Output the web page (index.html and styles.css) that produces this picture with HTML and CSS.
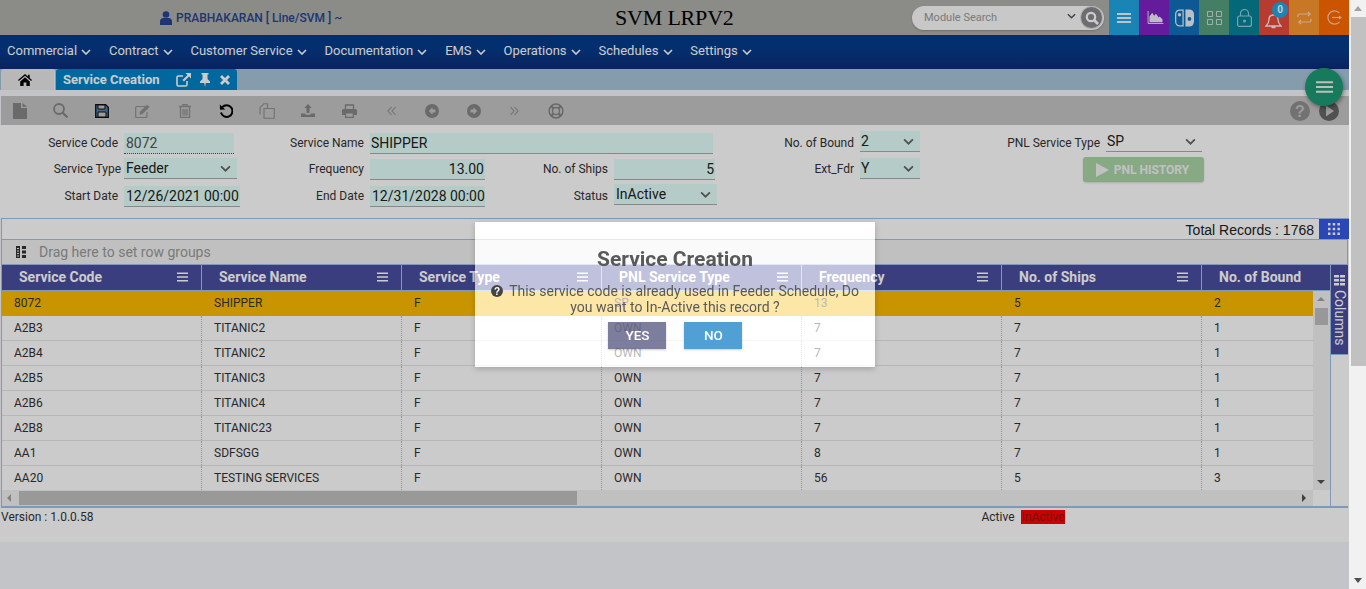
FILE: index.html
```html
<!DOCTYPE html>
<html>
<head>
  <meta charset="utf-8">
  <title>SVM LRPV2</title>
  <link rel="stylesheet" href="styles.css">
</head>
<body>
  <svg class="sprite" xmlns="http://www.w3.org/2000/svg">
    <symbol id="chev" viewBox="0 0 10 6"><path d="M1 1l4 4 4-4" fill="none" stroke="currentColor" stroke-width="1.600"/></symbol>
    <symbol id="bars" viewBox="0 0 12 10"><path d="M0 1h12M0 5h12M0 9h12" fill="none" stroke="currentColor" stroke-width="1.700"/></symbol>
    <symbol id="dots" viewBox="0 0 12 12"><path d="M0 0h2.500v2.500H0zM4.700 0h2.500v2.500H4.700zM9.400 0h2.500v2.500H9.400zM0 4.700h2.500v2.500H0zM4.700 4.700h2.500v2.500H4.700zM9.400 4.700h2.500v2.500H9.400zM0 9.400h2.500v2.500H0zM4.700 9.400h2.500v2.500H4.700zM9.400 9.400h2.500v2.500H9.400z" fill="currentColor"/></symbol>
    <symbol id="list" viewBox="0 0 11 11"><path d="M0 0h5v2.600H0zM6 0h5v2.600H6zM0 4h5v2.600H0zM6 4h5v2.600H6zM0 8h5v2.600H0zM6 8h5v2.600H6z" fill="currentColor"/></symbol>
  </svg>

  <div class="page">
    <header class="topbar">
      <div class="user">
        <svg width="12" height="14" viewBox="0 0 12 14"><circle cx="6" cy="3.500" r="3.300" fill="currentColor"/><path d="M0 14v-3.500C0 8.300 1.500 7 3.200 7h5.600C10.500 7 12 8.300 12 10.500V14z" fill="currentColor"/></svg>
        <span>PRABHAKARAN [ Line/SVM ] ~</span>
      </div>
      <div class="app-title">SVM LRPV2</div>
      <div class="search">
        <span class="search-text">Module Search</span>
        <svg class="search-chev" width="9" height="6"><use href="#chev"/></svg>
        <span class="search-btn">
          <svg width="14" height="14" viewBox="0 0 14 14"><circle cx="6" cy="6" r="4.200" fill="none" stroke="currentColor" stroke-width="2.200"/><path d="M9 9l4 4" stroke="currentColor" stroke-width="2.600"/></svg>
        </span>
      </div>
      <div class="tiles">
        <a class="tile t-menu"><svg width="14" height="10" viewBox="0 0 14 10"><path d="M0 1h14M0 5h14M0 9h14" stroke="currentColor" stroke-width="2"/></svg></a>
        <a class="tile t-chart"><svg width="17" height="13" viewBox="0 0 17 14"><path d="M.5 0v13.500H17" fill="none" stroke="currentColor"/><path d="M2 12V6l3-4 2 3 2-2 3 4 1-1 3 3v3z" fill="currentColor"/></svg></a>
        <a class="tile t-switch"><svg width="19" height="18" viewBox="0 0 20 18"><path d="M8.500.7H5A4.300 4.300 0 0 0 .7 5v8A4.300 4.300 0 0 0 5 17.300h3.500z" fill="none" stroke="currentColor" stroke-width="1.300"/><circle cx="4.700" cy="5.500" r="1.800" fill="currentColor"/><path d="M11 0h4a5 5 0 0 1 5 5v8a5 5 0 0 1-5 5h-4z" fill="currentColor"/><circle cx="15.200" cy="10" r="2" fill="#0f70bb"/></svg></a>
        <a class="tile t-apps"><svg width="15" height="14" viewBox="0 0 15 14"><path d="M.5.500h5v5h-5zM9.500.500h5v5h-5zM.5 8.500h5v5h-5zM9.500 8.500h5v5h-5z" fill="none" stroke="currentColor"/></svg></a>
        <a class="tile t-lock"><svg width="15" height="18" viewBox="0 0 15 18"><path d="M3.500 7V4.500a4 4 0 0 1 8 0V7" fill="none" stroke="currentColor" stroke-width="1.200"/><rect x=".6" y="7" width="13.800" height="10.400" rx="2" fill="none" stroke="currentColor" stroke-width="1.200"/><circle cx="7.500" cy="12" r="1.500" fill="currentColor"/></svg></a>
        <a class="tile t-bell">
          <svg class="bell" width="17" height="15" viewBox="0 0 17 15"><path d="M8.500 1C5.500 1 4 3 4 5.500c0 3-1 4.500-3 6.500h15c-2-2-3-3.500-3-6.500C13 3 11.500 1 8.500 1zM6.500 13.500h4" fill="none" stroke="currentColor" stroke-width="1.300"/></svg>
          <span class="badge">0</span>
        </a>
        <a class="tile t-swap"><svg width="15" height="14" viewBox="0 0 15 14"><path d="M1 6V4.500A1.500 1.500 0 0 1 2.500 3H13M11 .8L13.200 3 11 5.200M14 8v1.500a1.500 1.500 0 0 1-1.500 1.500H2M4 8.800L1.800 11 4 13.200" fill="none" stroke="currentColor" stroke-width="1.200"/></svg></a>
        <a class="tile t-out"><svg width="15" height="15" viewBox="0 0 15 15"><path d="M12.500 3.200a6.600 6.600 0 1 0 0 8.600" fill="none" stroke="currentColor" stroke-width="1.200"/><path d="M5 7.500h9" stroke="currentColor" stroke-width="1.200"/><path d="M12 5.500l3 2-3 2z" fill="currentColor"/></svg></a>
      </div>
    </header>

    <nav class="mainnav">
      <a>Commercial <svg width="10" height="6"><use href="#chev"/></svg></a>
      <a>Contract <svg width="10" height="6"><use href="#chev"/></svg></a>
      <a>Customer Service <svg width="10" height="6"><use href="#chev"/></svg></a>
      <a>Documentation <svg width="10" height="6"><use href="#chev"/></svg></a>
      <a>EMS <svg width="10" height="6"><use href="#chev"/></svg></a>
      <a>Operations <svg width="10" height="6"><use href="#chev"/></svg></a>
      <a>Schedules <svg width="10" height="6"><use href="#chev"/></svg></a>
      <a>Settings <svg width="10" height="6"><use href="#chev"/></svg></a>
    </nav>

    <div class="tabstrip">
      <div class="tab-home">
        <svg width="14" height="12" viewBox="0 0 14 12"><path d="M7 0L0 6l.8 1L7 1.700 13.200 7l.8-1-2.300-2V.8H10v1.800zM2.200 7.500V12h3.400V8.500h2.800V12h3.400V7.500L7 3.200z" fill="currentColor"/></svg>
      </div>
      <div class="tab-active">
        <span class="tab-name">Service Creation</span>
        <svg width="15" height="14" viewBox="0 0 15 14"><path d="M11 8v3.500a1.500 1.500 0 0 1-1.500 1.500h-7A1.500 1.500 0 0 1 1 11.500v-7A1.500 1.500 0 0 1 2.500 3H7" fill="none" stroke="currentColor" stroke-width="1.600"/><path d="M9.500 0H15v5.500l-2-2L8 8.500 6.500 7l5-5z" fill="currentColor"/></svg>
        <svg width="10" height="14" viewBox="0 0 10 14"><path d="M1.500 0h7v1.500H7.500V6l2.500 2.500V10H5.800L5 14l-.8-4H0V8.500L2.500 6V1.500h-1z" fill="currentColor"/></svg>
        <svg class="tab-close" width="10" height="10" viewBox="0 0 10 10"><path d="M1 1l8 8M9 1L1 9" stroke="currentColor" stroke-width="2.800"/></svg>
      </div>
    </div>

    <div class="toolbar">
      <span class="tool"><svg width="14" height="16" viewBox="0 0 14 16"><path d="M0 0h8v5h6v11H0zM9.500 0L14 3.800H9.500z" fill="currentColor"/></svg></span>
      <span class="tool"><svg width="15" height="15" viewBox="0 0 15 15"><circle cx="6" cy="6" r="5" fill="none" stroke="currentColor" stroke-width="1.800"/><path d="M9.500 9.500l5 5" stroke="currentColor" stroke-width="2.200"/></svg></span>
      <span class="tool tool-dark"><svg width="14" height="14" viewBox="0 0 14 14"><path d="M.7.700h10l2.600 2.600v10H.7z" fill="#4f7fae" stroke="currentColor" stroke-width="1.300"/><path d="M3 1h7v4H3z" fill="#c3c3c3" stroke="currentColor"/><path d="M3 8h8v5H3z" fill="#c3c3c3" stroke="currentColor"/></svg></span>
      <span class="tool tool-faint"><svg width="16" height="14" viewBox="0 0 16 14"><path d="M10 2.500H2A1.300 1.300 0 0 0 .7 3.800v8.700a1 1 0 0 0 1 1h9a1.300 1.300 0 0 0 1.300-1.300V8" fill="none" stroke="currentColor" stroke-width="1.200"/><path d="M5 7.500L12 .7l2.500 2.300-7 7-3 .8z" fill="currentColor"/></svg></span>
      <span class="tool tool-faint"><svg width="12" height="14" viewBox="0 0 12 14"><path d="M0 2.500h12M4 2.500V.7h4v1.800M1.500 3v10.300h9V3M4 5v6.500M6 5v6.500M8 5v6.500" fill="none" stroke="currentColor" stroke-width="1.300"/></svg></span>
      <span class="tool tool-black"><svg width="14" height="14" viewBox="0 0 14 14"><path d="M3.300 3.200A5.800 5.800 0 1 1 2 8.500" fill="none" stroke="currentColor" stroke-width="2"/><path d="M.8 .6l.2 5.200 5.200-.3z" fill="currentColor"/></svg></span>
      <span class="tool tool-faint"><svg width="16" height="16" viewBox="0 0 16 16"><path d="M5 5.500V15.300h10.300V5.500H5zM1 11.500V4.500L5 .7h3.500v4.800" fill="none" stroke="currentColor" stroke-width="1.100"/></svg></span>
      <span class="tool"><svg width="14" height="13" viewBox="0 0 14 13"><path d="M7 0l3.700 4H8.500v5h-3V4H3.300zM0 9.500h4.500V10.800h5V9.500H14V13H0z" fill="currentColor"/></svg></span>
      <span class="tool"><svg width="15" height="14" viewBox="0 0 15 14"><path d="M3.500 5V1h8v4" fill="none" stroke="currentColor" stroke-width="1.300"/><path d="M1.500 5h12A1.500 1.500 0 0 1 15 6.500V11h-3v3H3v-3H0V6.500A1.500 1.500 0 0 1 1.500 5zM4.200 9.500v3.200h6.600V9.500z" fill="currentColor"/></svg></span>
      <span class="tool tool-faint"><svg width="9" height="10" viewBox="0 0 9 10"><path d="M4.500 1L1 5l3.500 4M8.500 1L5 5l3.500 4" fill="none" stroke="currentColor" stroke-width="1.100"/></svg></span>
      <span class="tool"><svg width="14" height="14" viewBox="0 0 14 14"><circle cx="7" cy="7" r="7" fill="currentColor"/><path d="M7.500 3.200L3.800 7l3.700 3.800V8.500h3v-3h-3z" fill="#c3c3c3"/></svg></span>
      <span class="tool"><svg width="14" height="14" viewBox="0 0 14 14"><circle cx="7" cy="7" r="7" fill="currentColor"/><path d="M6.500 3.200L10.200 7l-3.700 3.800V8.500h-3v-3h3z" fill="#c3c3c3"/></svg></span>
      <span class="tool tool-faint"><svg width="9" height="10" viewBox="0 0 9 10"><path d="M.5 1L4 5 .5 9M4.500 1L8 5 4.500 9" fill="none" stroke="currentColor" stroke-width="1.100"/></svg></span>
      <span class="tool"><svg width="16" height="16" viewBox="0 0 16 16"><circle cx="8" cy="8" r="6.900" fill="none" stroke="currentColor" stroke-width="1.500"/><circle cx="8" cy="8" r="3.500" fill="none" stroke="currentColor" stroke-width="1.300"/><path d="M3 3l2.500 2.500M13 3l-2.500 2.500M3 13l2.500-2.500M13 13l-2.500-2.500" stroke="currentColor" stroke-width="2.400"/></svg></span>
      <span class="tool-right">
        <svg width="20" height="20" viewBox="0 0 20 20"><circle cx="10" cy="10" r="10" fill="#8f8f8f"/><text x="10" y="15.500" class="help-mark">?</text></svg>
        <svg width="20" height="20" viewBox="0 0 20 20"><circle cx="10" cy="10" r="10" fill="#666"/><path d="M7 4.500l8 5.500-8 5.500z" fill="#c3c3c3"/></svg>
      </span>
    </div>

    <form class="form">
      <label>Service Code</label>
      <div class="field code w-110">8072</div>
      <label>Service Name</label>
      <div class="field name-field">SHIPPER</div>
      <label>No. of Bound</label>
      <div class="field sel up-2 w-60">2 <svg width="11" height="7"><use href="#chev"/></svg></div>
      <label>PNL Service Type</label>
      <div class="field sel up-2 plain w-96">SP <svg width="11" height="7"><use href="#chev"/></svg></div>

      <label class="label-wide">Service Type</label>
      <div class="field sel up-1 w-113">Feeder <svg width="11" height="7"><use href="#chev"/></svg></div>
      <label>Frequency</label>
      <div class="field num w-115">13.00</div>
      <label>No. of Ships</label>
      <div class="field num w-101">5</div>
      <label>Ext_Fdr</label>
      <div class="field sel up-1 w-60">Y <svg width="11" height="7"><use href="#chev"/></svg></div>
      <button class="pnl-btn" type="button">
        <svg width="13" height="14" viewBox="0 0 13 14"><path d="M0 0l13 7-13 7z" fill="currentColor"/></svg>
        PNL HISTORY
      </button>

      <label>Start Date</label>
      <div class="field w-116">12/26/2021 00:00</div>
      <label>End Date</label>
      <div class="field w-115">12/31/2028 00:00</div>
      <label>Status</label>
      <div class="field sel up-2 w-103">InActive <svg width="11" height="7"><use href="#chev"/></svg></div>
    </form>

    <section class="gridbox">
      <div class="records">
        <span class="records-text">Total Records :&nbsp;1768</span>
        <span class="records-btn"><svg width="12" height="12"><use href="#dots"/></svg></span>
      </div>
      <div class="aggrid">
        <div class="groupbar">
          <svg width="10" height="12" viewBox="0 0 10 12"><path d="M0 0h4v12H0zM6 0h4v3H6zM6 4.500h4v3H6zM6 9h4v3H6z" fill="currentColor"/><path d="M1 2.500h2M1 5h2M1 7.500h2M1 10h2" stroke="#f0f0f0"/></svg>
          <span>Drag here to set row groups</span>
        </div>
        <div class="grid-main">
          <div class="grid-table">
            <div class="grid-head">
              <div class="hcell"><span>Service Code</span><svg width="11" height="10"><use href="#bars"/></svg></div>
              <div class="hcell"><span>Service Name</span><svg width="11" height="10"><use href="#bars"/></svg></div>
              <div class="hcell"><span>Service Type</span><svg width="11" height="10"><use href="#bars"/></svg></div>
              <div class="hcell"><span>PNL Service Type</span><svg width="11" height="10"><use href="#bars"/></svg></div>
              <div class="hcell"><span>Frequency</span><svg width="11" height="10"><use href="#bars"/></svg></div>
              <div class="hcell"><span>No. of Ships</span><svg width="11" height="10"><use href="#bars"/></svg></div>
              <div class="hcell"><span>No. of Bound</span></div>
            </div>
            <div class="grid-body">
              <div class="rows">
                <div class="row selected"><div>8072</div><div>SHIPPER</div><div>F</div><div>SP</div><div>13</div><div>5</div><div>2</div></div>
                <div class="row"><div>A2B3</div><div>TITANIC2</div><div>F</div><div>OWN</div><div>7</div><div>7</div><div>1</div></div>
                <div class="row"><div>A2B4</div><div>TITANIC2</div><div>F</div><div>OWN</div><div>7</div><div>7</div><div>1</div></div>
                <div class="row"><div>A2B5</div><div>TITANIC3</div><div>F</div><div>OWN</div><div>7</div><div>7</div><div>1</div></div>
                <div class="row"><div>A2B6</div><div>TITANIC4</div><div>F</div><div>OWN</div><div>7</div><div>7</div><div>1</div></div>
                <div class="row"><div>A2B8</div><div>TITANIC23</div><div>F</div><div>OWN</div><div>7</div><div>7</div><div>1</div></div>
                <div class="row"><div>AA1</div><div>SDFSGG</div><div>F</div><div>OWN</div><div>8</div><div>7</div><div>1</div></div>
                <div class="row"><div>AA20</div><div>TESTING SERVICES</div><div>F</div><div>OWN</div><div>56</div><div>5</div><div>3</div></div>
              </div>
              <div class="vscroll">
                <span class="arrow-up"></span>
                <span class="vthumb"></span>
                <span class="arrow-down"></span>
              </div>
            </div>
            <div class="hscroll">
              <span class="arrow-left"></span>
              <span class="hthumb"></span>
              <span class="arrow-right"></span>
              <span class="corner"></span>
            </div>
          </div>
          <div class="sidebar">
            <div class="columns-btn">
              <svg width="11" height="11"><use href="#list"/></svg>
              <span>Columns</span>
            </div>
          </div>
        </div>
      </div>
    </section>

    <footer class="footer">
      <span>Version : 1.0.0.58</span>
      <span class="legend">Active <b class="inactive">InActive</b></span>
    </footer>

    <button class="fab" type="button"><svg width="17" height="12" viewBox="0 0 17 12"><path d="M0 1.200h17M0 6h17M0 10.800h17" stroke="currentColor" stroke-width="2"/></svg></button>

    <div class="scrim"></div>

    <div class="modal">
      <h2>Service Creation</h2>
      <p>
        <svg width="12" height="12" viewBox="0 0 12 12"><circle cx="6" cy="6" r="6" fill="#444"/><text x="6" y="9.800" class="modal-mark">?</text></svg>
        This service code is already used in Feeder Schedule, Do you want to In-Active this record ?
      </p>
      <div class="modal-actions">
        <button class="btn-yes" type="button">YES</button>
        <button class="btn-no" type="button">NO</button>
      </div>
    </div>
  </div>

  <div class="pagescroll">
    <span class="ps-up"></span>
    <span class="ps-thumb"></span>
    <span class="ps-down"></span>
  </div>
</body>
</html>
```

FILE: styles.css
```css
/* Base */
* {
  box-sizing: border-box;
}

html, body {
  margin: 0;
  height: 100%;
  overflow: hidden;
}

body {
  display: flex;
  font-family: Roboto, "Liberation Sans", sans-serif;
  font-size: 12px;
  color: #333;
  background: #f1f1f1;
}

.sprite {
  display: none;
}

.page {
  position: relative;
  flex: 1;
  height: 589px;
  display: flex;
  flex-direction: column;
  background: #f4f5fa;
  overflow: hidden;
}

/* Top bar */
.topbar {
  height: 35px;
  flex: none;
  display: flex;
  align-items: center;
  background: #aeaeab;
}

.user {
  width: 460px;
  padding-left: 160px;
  display: flex;
  align-items: center;
  gap: 4px;
  color: #254392;
  font-weight: 500;
  font-size: 12px;
}

.app-title {
  width: 452px;
  padding-left: 155px;
  font-family: "Liberation Serif", serif;
  font-size: 22px;
  letter-spacing: -0.2px;
  color: #000;
}

.search {
  width: 192px;
  height: 24px;
  display: flex;
  align-items: center;
  background: #fafafa;
  border-radius: 12px;
  padding: 0 2px 0 12px;
  box-shadow: 0 1px 2px rgba(0, 0, 0, 0.2);
}

.search-text {
  flex: 1;
  font-size: 11px;
  color: #999;
}

.search-chev {
  color: #555;
  margin-right: 5px;
  margin-top: -4px;
}

.search-btn {
  width: 21px;
  height: 21px;
  border-radius: 50%;
  background: #87898c;
  color: #fff;
  display: flex;
  align-items: center;
  justify-content: center;
  box-shadow: 0 0 0 1px #ddd;
}

.tiles {
  display: flex;
  margin-left: 5px;
}

.tile {
  position: relative;
  width: 30px;
  height: 35px;
  display: flex;
  align-items: center;
  justify-content: center;
  color: #fff;
}

.tile svg {
  opacity: 0.9;
}

.t-menu { background: #21a6e2; }
.t-chart { background: #7e23c3; padding-left: 3px; }
.t-switch { background: #0f70bb; }
.t-apps { background: #569f7f; color: #cfe6db; }
.t-lock { background: #068398; color: #a8d5dd; }
.t-bell { background: #e64a3c; }
.t-swap { background: #fb952f; color: #fddcb8; }
.t-out { background: #fe6a00; color: #ffd9bd; }

.bell {
  margin-top: 8px;
  margin-right: 2px;
}

.badge {
  position: absolute;
  top: 2px;
  left: 13px;
  width: 16px;
  height: 16px;
  border-radius: 50%;
  background: #21a6e2;
  font-size: 10px;
  font-weight: 700;
  line-height: 16px;
  text-align: center;
}

/* Main menu */
.mainnav {
  height: 34px;
  flex: none;
  display: flex;
  align-items: center;
  padding: 0 0 3px 7px;
  background: linear-gradient(#063b8b 0%, #063b8b 40%, #0d2c78 100%);
}

.mainnav a {
  color: #fff;
  font-size: 13px;
  margin-right: 17.700px;
  white-space: nowrap;
}

.mainnav svg {
  margin-left: 1px;
  vertical-align: 0;
}

/* Tabs */
.tabstrip {
  height: 21px;
  flex: none;
  display: flex;
  background: #a6c3d7;
  padding-left: 1px;
}

.tab-home {
  width: 54px;
  padding-right: 6px;
  background: #e6e6e6;
  border-radius: 3px 3px 0 0;
  border-right: 1px solid #f4f4f4;
  display: flex;
  align-items: center;
  justify-content: center;
  color: #000;
}

.tab-active {
  width: 181px;
  margin-left: 1px;
  padding: 0 7px;
  display: flex;
  align-items: center;
  gap: 9px;
  background: #0083c7;
  border-radius: 3px 3px 0 0;
  color: #fff;
}

.tab-name {
  width: 104px;
  font-size: 13px;
  font-weight: 700;
  white-space: nowrap;
}

.tab-close {
  margin-left: 1px;
}

/* Toolbar */
.toolbar {
  height: 29px;
  flex: none;
  margin-top: 6px;
  margin-left: 1px;
  display: flex;
  align-items: center;
  background: #c3c3c3;
  color: #808080;
}

.tool {
  width: 41.270px;
  display: flex;
  justify-content: center;
  color: #858585;
}

.tool:first-child {
  margin-left: -2px;
}

.tool-dark { color: #111; }
.tool-black { color: #000; }
.tool-faint { color: #8f8f8f; }

.tool-right {
  margin-left: auto;
  display: flex;
  gap: 9px;
  padding-right: 10px;
}

.help-mark {
  font-family: "Liberation Sans", sans-serif;
  font-weight: 700;
  font-size: 16px;
  fill: #c3c3c3;
  text-anchor: middle;
}

/* Form */
.form {
  height: 93px;
  flex: none;
  padding-top: 8px;
  background: #fefefe;
  display: grid;
  grid-template-columns: 118px 116px 118px 115px 117px 103px 131px 60px 174px 98px;
  grid-template-rows: 26px 27px 27px;
  column-gap: 6px;
  align-items: start;
}

.form label {
  height: 21px;
  line-height: 21px;
  text-align: right;
  white-space: nowrap;
  color: #333;
}

.form .label-wide {
  margin-right: -3px;
}

.field {
  height: 21px;
  justify-self: start;
  padding: 0 1px 0 2px;
  background: #e2fef9;
  border-bottom: 1px solid #aaa;
  font-size: 14px;
  line-height: 20px;
  color: #222;
  white-space: nowrap;
}

.code {
  color: #555;
  border-bottom: 1px dotted #555;
}

.num {
  text-align: right;
}

.sel {
  display: flex;
  align-items: center;
  justify-content: space-between;
  padding-left: 2px;
  padding-right: 6px;
  color: #222;
}

.sel svg {
  color: #666;
  flex: none;
}

.plain {
  background: transparent;
  padding-left: 1px;
}

.up-1 { margin-top: -1px; }
.up-2 { margin-top: -2px; }

.name-field {
  width: 343px;
  grid-column: span 3;
  padding-left: 1px;
}

.w-60 { width: 60px; padding-left: 1px; }
.w-96 { width: 96px; }
.w-101 { width: 101px; }
.w-103 { width: 103px; }
.w-110 { width: 110px; }
.w-113 { width: 113px; }
.w-115 { width: 115px; }
.w-116 { width: 116px; }

.pnl-btn {
  grid-column: span 2;
  justify-self: end;
  width: 121px;
  height: 25px;
  margin-top: -2px;
  padding: 0 2px 0 0;
  border: 0;
  border-radius: 3px;
  display: flex;
  align-items: center;
  justify-content: center;
  gap: 5px;
  background: #a9d4a6;
  color: #f2f2f2;
  font-family: Roboto, sans-serif;
  font-size: 12px;
  font-weight: 700;
  box-shadow: 0 1px 2px rgba(0, 0, 0, 0.15);
}

/* Grid */
.gridbox {
  height: 290px;
  flex: none;
  margin-left: 1px;
  background: #fefefe;
  border-top: 1px solid #9fc0e6;
  display: flex;
  flex-direction: column;
}

.records {
  height: 20px;
  flex: none;
  display: flex;
  align-items: center;
  justify-content: flex-end;
  border-left: 1px solid #9fc0e6;
}

.records-text {
  padding-top: 2px;
  font-family: "Liberation Sans", sans-serif;
  font-size: 14px;
  margin-right: 5px;
  color: #222;
}

.records-btn {
  width: 30px;
  height: 20px;
  display: flex;
  align-items: center;
  justify-content: center;
  background: #3559e6;
  color: #fff;
}

.aggrid {
  flex: 1;
  width: 1347px;
  min-height: 0;
  border: 1px solid #9fc0e6;
  border-bottom-width: 2px;
  display: flex;
  flex-direction: column;
}

.groupbar {
  height: 25px;
  flex: none;
  padding-left: 14px;
  display: flex;
  align-items: center;
  gap: 13px;
  background: #f0f0f0;
  border-bottom: 1px solid #9fc0e6;
  color: #333;
}

.groupbar span {
  font-size: 14px;
  color: #999;
}

.grid-main {
  flex: 1;
  min-height: 0;
  display: flex;
}

.grid-table {
  width: 1328px;
  flex: none;
  display: flex;
  flex-direction: column;
  overflow: hidden;
}

.grid-head {
  height: 26px;
  flex: none;
  display: flex;
  background: #494e9e;
  border-bottom: 1px solid #9fc0e6;
}

.hcell {
  width: 200px;
  flex: none;
  padding: 0 13px 1px 17px;
  display: flex;
  align-items: center;
  justify-content: space-between;
  border-right: 1px solid #9fc0e6;
  color: #fff;
  font-size: 14px;
  font-weight: 700;
  white-space: nowrap;
}

.hcell:last-child {
  border-right: 0;
}

.grid-body {
  flex: 1;
  min-height: 0;
  display: flex;
  background: #fefefe;
}

.rows {
  width: 1311px;
  flex: none;
  overflow: hidden;
}

.row {
  height: 25px;
  display: flex;
  border-bottom: 1px solid #e4e4e4;
}

.row div {
  width: 200px;
  flex: none;
  padding-left: 12px;
  line-height: 24px;
  border-right: 1px dotted #9fc0e6;
  color: #333;
}

.row.selected {
  background: #fabb00;
  border-bottom-color: #fabb00;
}

.vscroll {
  flex: 1;
  position: relative;
  background: #f0f0f0;
}

.arrow-up, .arrow-down, .arrow-left, .arrow-right,
.ps-up, .ps-down {
  position: absolute;
  width: 0;
  height: 0;
  border-style: solid;
  border-color: transparent;
}

.arrow-up {
  top: 6px;
  left: 4px;
  border-width: 0 4px 4px;
  border-bottom-color: #a3a3a3;
}

.arrow-down {
  bottom: 6px;
  left: 4px;
  border-width: 4px 4px 0;
  border-top-color: #505050;
}

.vthumb {
  position: absolute;
  top: 17px;
  left: 2px;
  width: 13px;
  height: 17px;
  background: #bebebe;
}

.hscroll {
  height: 16px;
  flex: none;
  position: relative;
  background: #f0f0f0;
}

.arrow-left {
  top: 4px;
  left: 5px;
  border-width: 4px 4px 4px 0;
  border-right-color: #a3a3a3;
}

.arrow-right {
  top: 4px;
  left: 1300px;
  border-width: 4px 0 4px 4px;
  border-left-color: #505050;
}

.hthumb {
  position: absolute;
  top: 1px;
  left: 17px;
  width: 558px;
  height: 14px;
  background: #c0c0c0;
}

.corner {
  position: absolute;
  top: 0;
  right: 0;
  width: 17px;
  height: 16px;
  background: #fefefe;
}

.sidebar {
  flex: 1;
  border-left: 1px solid #9fc0e6;
  background: #fefefe;
}

.columns-btn {
  width: 17px;
  height: 90px;
  padding-top: 10px;
  display: flex;
  flex-direction: column;
  align-items: center;
  gap: 4px;
  background: #494e9e;
  border-bottom: 1px solid #9fc0e6;
  color: #fff;
}

.columns-btn svg {
  flex: none;
}

.columns-btn span {
  writing-mode: vertical-rl;
  font-size: 14px;
  line-height: 17px;
}

/* Footer */
.footer {
  height: 34px;
  flex: none;
  padding-top: 2px;
  display: flex;
  background: #fefefe;
}

.footer span:first-child {
  padding-left: 1px;
}

.legend {
  margin-left: 888px;
}

.inactive {
  display: inline-block;
  margin-left: 3px;
  padding: 0 1px;
  height: 14px;
  line-height: 14px;
  background: #ff0000;
  color: #991515;
  font-weight: 400;
}

/* Floating menu */
.fab {
  position: absolute;
  top: 68px;
  left: 1305px;
  width: 38px;
  height: 38px;
  padding: 0;
  border: 0;
  border-radius: 50%;
  background: #1d9973;
  color: #eee;
  display: flex;
  align-items: center;
  justify-content: center;
  box-shadow: 1px 2px 4px rgba(0, 0, 0, 0.4);
}

/* Dialog */
.scrim {
  position: absolute;
  inset: 0;
  background: rgba(0, 0, 0, 0.2);
}

.modal {
  position: absolute;
  top: 222px;
  left: 475px;
  width: 400px;
  height: 145px;
  padding: 24px 15px 0;
  text-align: center;
  background: rgba(255, 255, 255, 0.65);
  backdrop-filter: brightness(1.25);
  box-shadow: 0 2px 6px rgba(0, 0, 0, 0.2);
}

.modal h2 {
  margin: 0;
  font-size: 21px;
  font-weight: 700;
  line-height: 26px;
  color: #595959;
}

.modal p {
  margin: 11px 0 0;
  font-size: 14px;
  line-height: 16px;
  color: #595959;
}

.modal p svg {
  vertical-align: -1px;
  margin-right: 3px;
}

.modal-mark {
  font-family: "Liberation Sans", sans-serif;
  font-weight: 700;
  font-size: 10px;
  fill: #fff;
  text-anchor: middle;
}

.modal-actions {
  margin-top: 7px;
  display: flex;
  justify-content: center;
  gap: 18px;
}

.modal-actions button {
  width: 58px;
  height: 27px;
  padding: 0 0 1px 1px;
  border: 0;
  color: #fff;
  font-family: Roboto, sans-serif;
  font-size: 13.500px;
  font-weight: 500;
  box-shadow: 0 1px 2px rgba(0, 0, 0, 0.2);
}

.btn-yes {
  background: rgba(70, 70, 115, 0.7);
}

.btn-no {
  background: #50a0d6;
}

/* Page scrollbar */
.pagescroll {
  position: relative;
  width: 17px;
  height: 589px;
  flex: none;
  background: #f1f1f1;
}

.ps-up {
  top: 6px;
  left: 5px;
  border-width: 0 4px 5px;
  border-bottom-color: #a3a3a3;
}

.ps-down {
  bottom: 6px;
  left: 5px;
  border-width: 5px 4px 0;
  border-top-color: #505050;
}

.ps-thumb {
  position: absolute;
  top: 17px;
  left: 2px;
  right: 0;
  height: 349px;
  background: #c1c1c1;
}
```
